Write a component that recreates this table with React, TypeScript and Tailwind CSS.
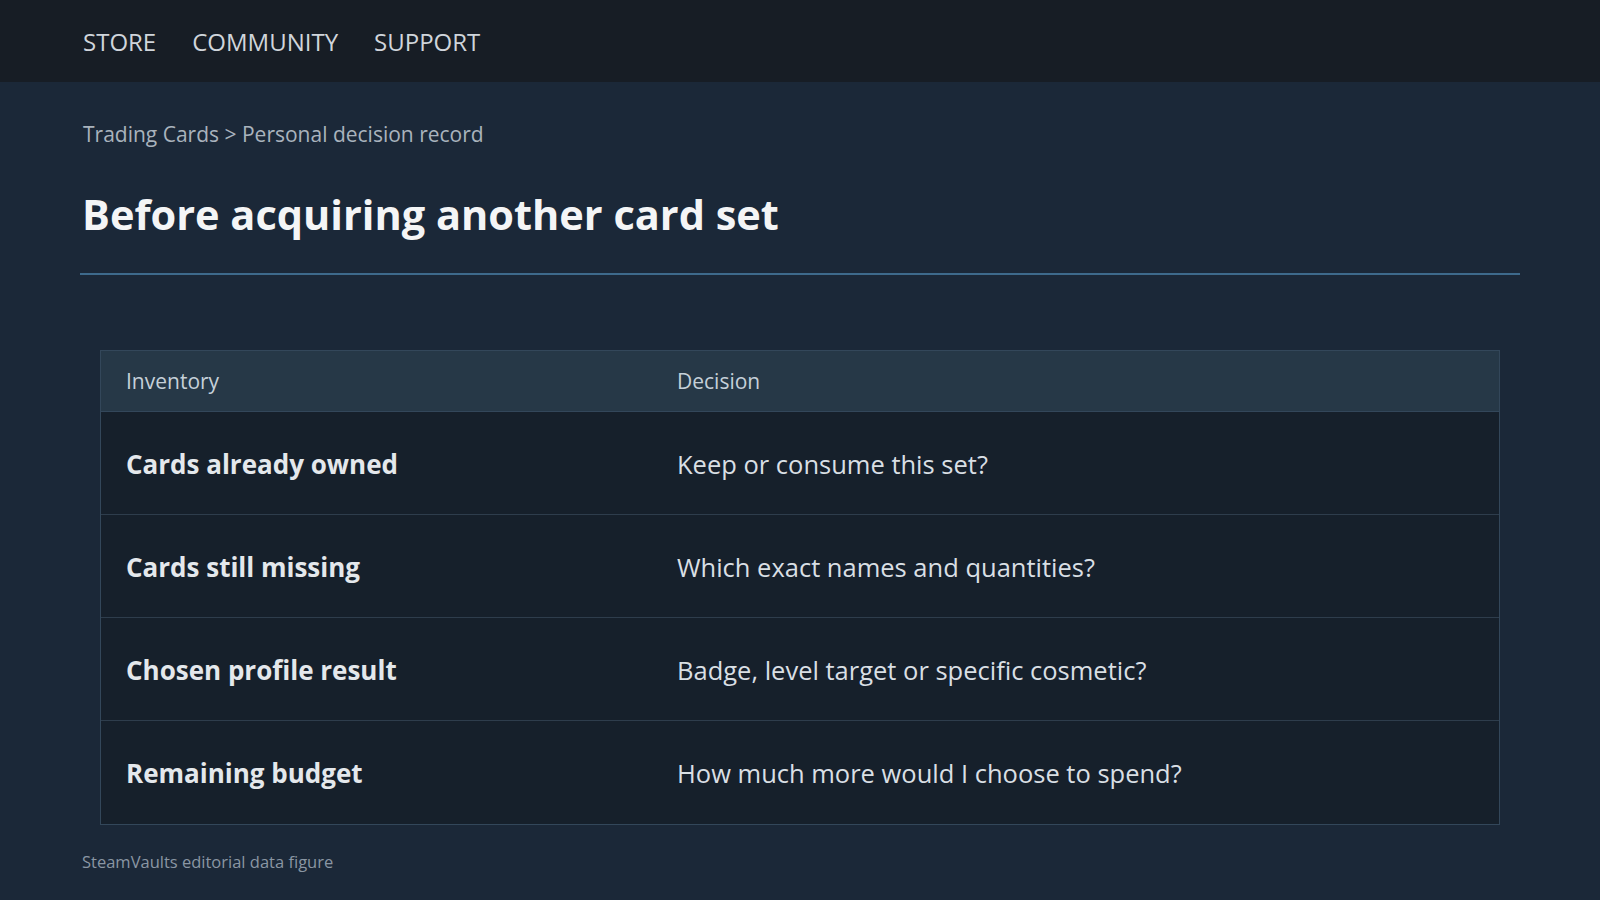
const rows = [
  { item: 'Cards already owned', decision: 'Keep or consume this set?' },
  { item: 'Cards still missing', decision: 'Which exact names and quantities?' },
  { item: 'Chosen profile result', decision: 'Badge, level target or specific cosmetic?' },
  { item: 'Remaining budget', decision: 'How much more would I choose to spend?' },
]

export default function App() {
  return (
    <div
      className="min-h-[900px] w-full bg-[#1b2838]"
      style={{ fontFamily: '"Open Sans", "Noto Sans", sans-serif' }}
    >
      <header className="h-[82px] bg-[#171d25] pl-[83px] pr-[80px] pt-[1px] flex items-center gap-[36px]">
        {['STORE', 'COMMUNITY', 'SUPPORT'].map((n) => (
          <span key={n} className="text-[24px] text-[#d0d5db]">
            {n}
          </span>
        ))}
      </header>

      <main className="px-[80px]">
        <div className="pt-[37px] pl-[3px] text-[21px] text-[#a9b3bd]">
          Trading Cards &gt; Personal decision record
        </div>
        <h1 className="mt-[35px] pl-[2px] text-[41.5px] font-bold text-[#f4f5f6] leading-[56px]">
          Before acquiring another card set
        </h1>
        <div className="mt-[31px] h-[2px] bg-[#3e6a8c]" />

        <div className="mx-[20px] mt-[75px] border border-[#33475a]">
          <div className="flex h-[61px] items-center bg-[#263847] border-b border-[#33475a] pt-[2px] text-[21px] text-[#c5d0d9]">
            <div className="w-[551px] pl-[25px]">Inventory</div>
            <div className="pl-[25px]">Decision</div>
          </div>
          {rows.map((r, i) => (
            <div
              key={r.item}
              className={
                'flex h-[103px] items-center bg-[#16202b] pt-[3px] ' +
                (i < rows.length - 1 ? 'border-b border-[#2e3d4c]' : '')
              }
            >
              <div className="w-[551px] pl-[25px] text-[26px] font-bold text-[#e4e8ec]">{r.item}</div>
              <div className="pl-[25px] text-[25.5px] text-[#d9dfe4]">{r.decision}</div>
            </div>
          ))}
        </div>

        <div className="mt-[25px] pl-[2px] text-[16.5px] text-[#8a96a3]">SteamVaults editorial data figure</div>
      </main>
    </div>
  )
}
